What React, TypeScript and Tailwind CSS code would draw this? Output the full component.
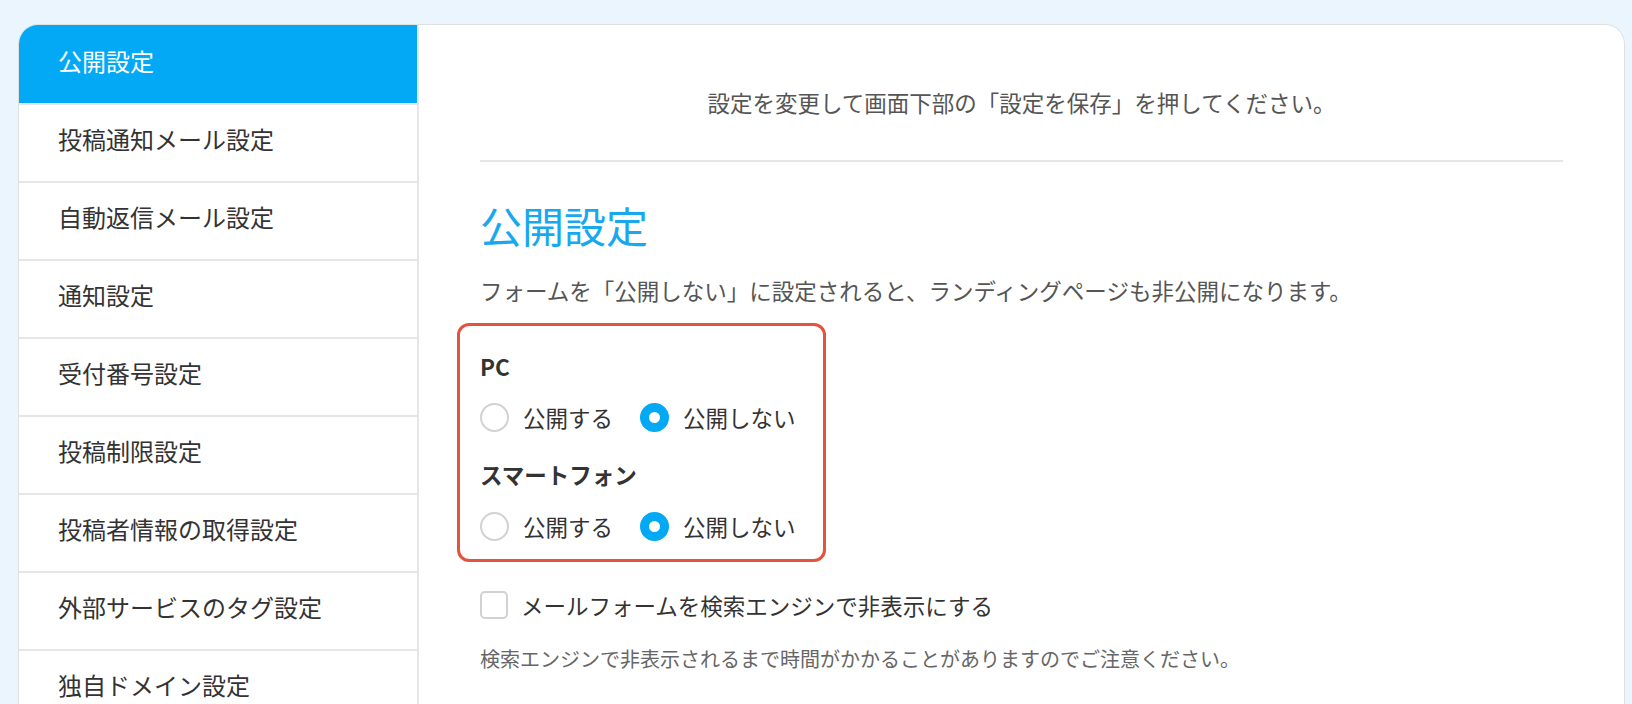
import React from "react";

const font = { fontFamily: '"Noto Sans CJK JP", "Noto Sans", sans-serif' };

const items = [
  "公開設定",
  "投稿通知メール設定",
  "自動返信メール設定",
  "通知設定",
  "受付番号設定",
  "投稿制限設定",
  "投稿者情報の取得設定",
  "外部サービスのタグ設定",
  "独自ドメイン設定",
];

function Radio({ checked, label }: { checked: boolean; label: string }) {
  return (
    <label className="flex items-center">
      {checked ? (
        <span className="w-[29px] h-[29px] rounded-full border-[9px] border-[#03a9f4] bg-white box-border" />
      ) : (
        <span className="w-[29px] h-[29px] rounded-full border-2 border-[#d2d2d2] bg-white box-border" />
      )}
      <span className="ml-[14px] text-[22.5px] leading-[34px] text-[#333]">{label}</span>
    </label>
  );
}

function RadioGroup() {
  return (
    <div className="flex items-center h-[34px]">
      <Radio checked={false} label="公開する" />
      <div className="w-[27px]" />
      <Radio checked={true} label="公開しない" />
    </div>
  );
}

export default function App() {
  return (
    <div className="w-[1632px] h-[704px] overflow-hidden bg-[#ebf5fd]" style={font}>
      <div className="ml-[18px] mt-[24px] w-[1607px] h-[760px] rounded-t-[20px] border border-[#e0e0e0] bg-white overflow-hidden flex">
        <div className="w-[400px] shrink-0 border-r-2 border-[#e6e6e6] flex flex-col">
          {items.map((t, i) => (
            <div
              key={t}
              className={
                i === 0
                  ? "h-[78px] shrink-0 flex items-center pl-[39px] pb-[7px] bg-[#03a9f4] text-white text-[24px]"
                  : "h-[78px] shrink-0 flex items-center pl-[39px] pb-[8px] border-t-2 border-[#e6e6e6] text-[#333] text-[24px]"
              }
            >
              {t}
            </div>
          ))}
        </div>
        <div className="flex-1 px-[61px] pt-[60px] flex flex-col">
          <p className="text-center text-[22.5px] leading-[34px] text-[#555]">
            設定を変更して画面下部の「設定を保存」を押してください。
          </p>
          <div className="mt-[41px] h-[2px] bg-[#e6e6e6]" />
          <h2 className="mt-[33px] text-[42px] leading-[60px] text-[#18a8ee]">公開設定</h2>
          <p className="mt-[18px] text-[22.5px] leading-[34px] text-[#555]">
            フォームを「公開しない」に設定されると、ランディングページも非公開になります。
          </p>
          <div className="mt-[16px] -ml-[23px] w-[369px] rounded-[12px] border-[3px] border-[#e3533d] pl-[20px] pt-[23px] pb-[16px]">
            <div className="text-[22.5px] leading-[34px] font-semibold text-[#333]">PC</div>
            <div className="mt-[17px]">
              <RadioGroup />
            </div>
            <div className="mt-[23px] text-[22.5px] leading-[34px] font-semibold text-[#333]">スマートフォン</div>
            <div className="mt-[18px]">
              <RadioGroup />
            </div>
          </div>
          <label className="mt-[26px] flex items-center h-[34px]">
            <span className="w-[28px] h-[28px] rounded-[5px] border-2 border-[#d2d2d2] bg-white box-border" />
            <span className="ml-[13px] text-[22.5px] leading-[34px] text-[#333]">
              メールフォームを検索エンジンで非表示にする
            </span>
          </label>
          <p className="mt-[22px] text-[20px] leading-[30px] text-[#666]">
            検索エンジンで非表示されるまで時間がかかることがありますのでご注意ください。
          </p>
        </div>
      </div>
    </div>
  );
}
